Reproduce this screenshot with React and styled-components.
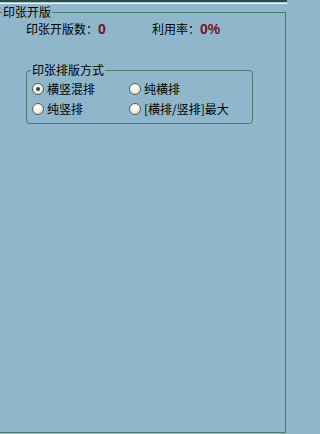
import React, { useState } from "react";
import styled, { createGlobalStyle } from "styled-components";

const GlobalStyle = createGlobalStyle`
  html, body {
    margin: 0;
    padding: 0;
    background: #8fb6cb;
  }
  body {
    font-family: "Noto Sans CJK SC", "Liberation Sans", sans-serif;
    font-size: 12px;
    color: #000;
  }
`;

const Page = styled.div`
  width: 287px;
  height: 434px;
  background: #8fb6cb;
  overflow: hidden;
`;

const TopStrip = styled.div`
  height: 1px;
  border-top: 2px solid #2f4c45;
  border-bottom: 1px solid #f2f6f6;
  background: #a9c5d4;
`;

const Group = styled.fieldset`
  box-sizing: border-box;
  margin: ${(p) => p.$margin || "0"};
  padding: ${(p) => p.$padding || "0"};
  width: ${(p) => p.$width}px;
  height: ${(p) => (p.$height ? `${p.$height}px` : "auto")};
  min-width: 0;
  border: 1px solid #4b7d6c;
  border-left: ${(p) => (p.$noLeft ? "none" : "1px solid #4b7d6c")};
  border-radius: ${(p) => p.$radius || 0}px;
`;

const Legend = styled.legend`
  margin-left: ${(p) => p.$offset || 0}px;
  padding: 0 1px;
  font-size: 12px;
  line-height: 14px;
  color: #000;
`;

const StatRow = styled.div`
  display: grid;
  grid-template-columns: 126px auto;
  margin-top: 2px;
  padding-left: 26px;
  height: 16px;
  line-height: 16px;
`;

const Stat = styled.div`
  display: flex;
  align-items: baseline;
`;

const Value = styled.span`
  color: #7a0e22;
  font-family: "Liberation Sans", Arial, sans-serif;
  font-weight: bold;
  font-size: 14px;
`;

const RadioGrid = styled.div`
  display: grid;
  grid-template-columns: 97px auto;
  grid-auto-rows: 20px;
  padding: 2px 0 4px 5px;
`;

const Option = styled.label`
  display: flex;
  align-items: center;
  gap: 3px;
  cursor: pointer;
  white-space: nowrap;
  line-height: 14px;
`;

const Dot = styled.span`
  box-sizing: border-box;
  display: inline-flex;
  align-items: center;
  justify-content: center;
  width: 12px;
  height: 12px;
  border-radius: 50%;
  border: 1px solid #5a5e58;
  background: radial-gradient(circle at 40% 35%, #ffffff 0%, #f4f4ea 40%, #c9cbb8 100%);
  flex-shrink: 0;

  &::after {
    content: "";
    width: 4px;
    height: 4px;
    border-radius: 50%;
    background: #3a3a36;
    display: ${(p) => (p.$on ? "block" : "none")};
  }
`;

const options = [
  { id: "mix", label: "横竖混排" },
  { id: "h", label: "纯横排" },
  { id: "v", label: "纯竖排" },
  { id: "max", label: "[横排/竖排]最大" },
];

export default function App() {
  const [mode, setMode] = useState("mix");

  return (
    <Page>
      <GlobalStyle />
      <TopStrip />
      <Group $width={286} $height={428} $margin="1px 0 0 0" $noLeft>
        <Legend $offset={2}>印张开版</Legend>
        <StatRow>
          <Stat>
            印张开版数：<Value>0</Value>
          </Stat>
          <Stat>
            利用率：<Value>0%</Value>
          </Stat>
        </StatRow>
        <Group $width={227} $margin="26px 0 0 26px" $radius={4}>
          <Legend $offset={4}>印张排版方式</Legend>
          <RadioGrid>
            {options.map((o) => (
              <Option key={o.id} onClick={() => setMode(o.id)}>
                <Dot $on={mode === o.id} />
                {o.label}
              </Option>
            ))}
          </RadioGrid>
        </Group>
      </Group>
    </Page>
  );
}
